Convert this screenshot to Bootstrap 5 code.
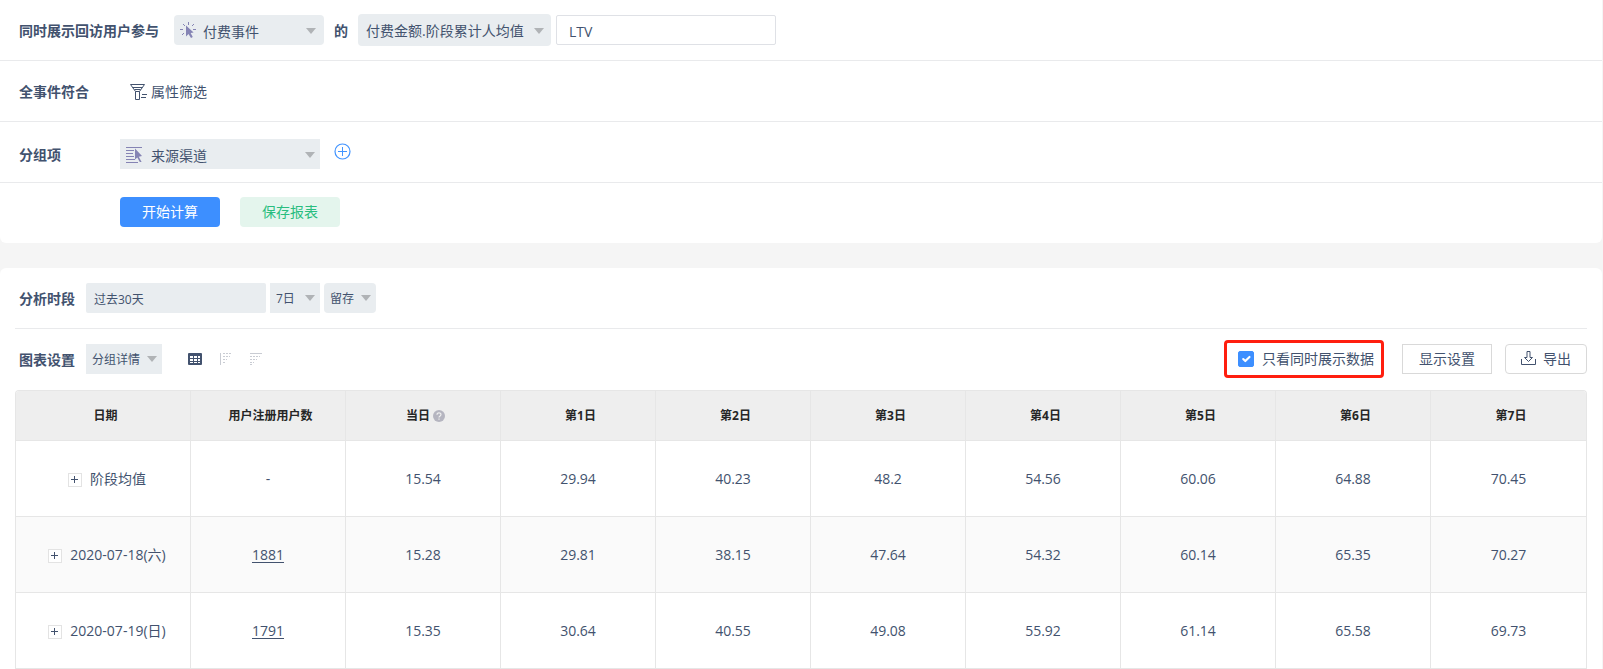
<!DOCTYPE html>
<html lang="zh-CN">
<head>
<meta charset="utf-8">
<meta name="viewport" content="width=device-width, initial-scale=1">
<title>LTV</title>
<link href="https://cdn.jsdelivr.net/npm/bootstrap@5.3.0/dist/css/bootstrap.min.css" rel="stylesheet">
<style>
  :root { --ink: #42526e; --fill: #e9edf0; --line: #e9eaec; --cell: #e6e6e6; }
  body { background: #f5f5f5; color: var(--ink); font: 14px/20px "Open Sans", "Noto Sans CJK SC", sans-serif; }
  .page { padding-right: 1px; }
  .panel { background: #fff; border-radius: 6px; }
  .query { border-radius: 0 0 6px 6px; }
  .panel-last { border-radius: 6px 6px 0 0; margin-top: 25px; }
  .bar { display: flex; align-items: center; min-height: 61px; border-bottom: 1px solid var(--line); }
  .query .bar { padding: 0 19px; }
  .bar-label { font-weight: 700; white-space: nowrap; padding-top: 2px; }
  .label-col { width: 101px; }
  .picker { position: relative; height: 30px; background: var(--fill); }
  .picker svg { position: absolute; left: 6px; top: 7px; pointer-events: none; }
  .picker select { display: block; width: 100%; height: 100%; border: 0; color: var(--ink); appearance: none; font-size: inherit; line-height: 20px;
    background: url("data:image/svg+xml,%3Csvg xmlns='http://www.w3.org/2000/svg' width='10' height='6'%3E%3Cpath d='M0 0h10L5 6z' fill='%23b0b3b6'/%3E%3C/svg%3E") no-repeat right 5px top 12px; }
  .w-event { width: 150px; margin-left: 15px; } .w-event select { padding: 4px 20px 0 29px; background-position: right 8px top 13px; }
  .w-metric { width: 193px; height: 32px; } .w-metric select { padding: 2px 20px 0 8px; background-position: right 7px top 14px; }
  .of-label { padding-left: 10px; padding-right: 10px; }
  .w-group { width: 200px; } .w-group select { padding: 3px 20px 0 31px; background-position: right 5px top 13px; }
  .compact { font-size: 12px; } .compact select { padding: 1px 15px 0 6px; }
  .w-days { width: 50px; } .w-kind { width: 52px; } .w-detail { width: 76px; }
  .after-label { margin-left: 11px; }
  .box { height: 30px; color: var(--ink); border: 1px solid #dfe1e6; border-radius: 2px; }
  .w-name { width: 220px; padding: 2px 12px 0; margin-left: 5px; }
  .w-range { width: 180px; padding: 2px 8px 0; font-size: 12px; background: var(--fill); border: 0; }
  .plain { padding: 0; border: 0; background: none; color: var(--ink); display: inline-flex; align-items: center; }
  .filter { margin-left: 10px; padding-top: 2px; }
  .add { margin-left: 14px; margin-bottom: 6px; }
  .query .bar-group { padding-top: 4px; }
  .act { width: 100px; height: 30px; padding: 0; font-size: 14px; line-height: 20px; border: 0; border-radius: 4px; }
  .act-run { background: #3d8fff; color: #fff; }
  .act-save { background: #e4f5ed; color: #29bd7f; }
  .actions { padding: 14px 20px 16px 120px; }
  .result { padding: 0 15px; }
  .result .bar { padding-left: 4px; }
  .result .tools { border: 0; padding-bottom: 1px; }
  .only { border: 3px solid #ff1e0f; border-radius: 4px; width: 160px; height: 38px; padding-left: 11px; margin-right: 18px; }
  .only .form-check-input { width: 16px; height: 16px; margin: 0 8px 0 0; border-radius: 2px; }
  .only .form-check-input:checked { background-color: #3d8fff; border-color: #3d8fff; }
  .tool-btn { background: #fff; border: 1px solid #d9d9d9; color: var(--ink); height: 30px; padding: 0; }
  .w-show { width: 90px; margin-right: 13px; } .w-export { width: 82px; border-radius: 4px; }
  .w-export svg { margin: 0 7px 2px 0; }
  .views { margin-left: 26px; gap: 18px; }
  .grid-wrap { border: 1px solid var(--cell); border-bottom: 0; border-radius: 4px 4px 0 0; overflow: hidden; }
  .grid { width: 100%; table-layout: fixed; text-align: center; border-collapse: separate; border-spacing: 0; }
  .grid th, .grid td { border: 0 solid var(--cell); border-bottom-width: 1px; border-right-width: 1px; vertical-align: middle; padding: 0; }
  .grid tr > :last-child { border-right-width: 0; }
  .grid thead th { height: 50px; background: #eee; color: #262626; font-size: 12px; padding-left: 5px; }
  .grid tbody th { font-weight: 400; padding-left: 8px; }
  .grid tbody tr { height: 76px; }
  .grid tbody tr:nth-child(2) { background: #fafafa; }
  .grid a { color: inherit; text-underline-offset: 2px; }
  .col-date { width: 175px; }
  .help { margin-left: 3px; }
  .expand { width: 14px; height: 14px; border: 1px solid #e3e3e3; background: #fff; padding: 0; margin-right: 8px; display: inline-flex; align-items: center; justify-content: center; vertical-align: 0; }
</style>
</head>
<body>
<main class="page">
  <section class="panel query">
    <div class="bar">
      <label class="bar-label" for="event">同时展示回访用户参与</label>
      <div class="picker w-event rounded-1">
        <svg width="16" height="16" viewBox="0 0 16 16" fill="none" stroke="#8584b4"><path d="M8.500 0v3M3 2l2 2M14 2l-2 2M0 7.500h3M13 7.500h3M2 13l2-2"/><path d="M6 3.500v11l2.500-2.500 2.500 4 1.800-1-2.200-4 3-.5z" fill="#8584b4" stroke="none"/></svg>
        <select id="event"><option>付费事件</option></select>
      </div>
      <label class="bar-label of-label" for="metric">的</label>
      <div class="picker w-metric rounded-1"><select id="metric"><option>付费金额.阶段累计人均值</option></select></div>
      <input class="box w-name" type="text" value="LTV" aria-label="指标名称">
    </div>
    <div class="bar">
      <span class="bar-label label-col">全事件符合</span>
      <button class="plain filter" type="button">
        <svg class="me-1" width="17" height="18" viewBox="0 0 17 18" fill="none" stroke="#42526e"><path d="M.5 1.500h14L9.500 8.500v8h-4v-8zM2.500 4.500h10M4.500 6.500h6M5.500 8.500h4M12 11.500h5M11 14.500h5"/></svg>属性筛选</button>
    </div>
    <div class="bar bar-group">
      <label class="bar-label label-col" for="group">分组项</label>
      <div class="picker w-group">
        <svg width="17" height="18" viewBox="0 0 17 18" fill="none" stroke="#8584b4"><path d="M0 1.500h16M0 4.500h8M0 7.500h7M0 10.500h8M0 13.500h9M0 16.500h12"/><path d="M9 2.500v11l2.300-2 2.500 4.500h1.800l-2.800-5.200 3.200-.8z" fill="#8584b4" stroke="none"/></svg>
        <select id="group"><option>来源渠道</option></select>
      </div>
      <button class="plain add" type="button" aria-label="添加分组项">
        <svg width="17" height="17" viewBox="0 0 17 17" fill="none" stroke="#4294ff"><circle cx="8.500" cy="8.500" r="7.500" stroke-width="1.200"/><path d="M8.500 4v9M4 8.500h9"/></svg>
      </button>
    </div>
    <div class="actions d-flex">
      <button class="btn act act-run me-3" type="button">开始计算</button>
      <button class="btn act act-save ms-1" type="button">保存报表</button>
    </div>
  </section>

  <section class="panel panel-last result">
    <div class="bar">
      <label class="bar-label" for="range">分析时段</label>
      <input class="box w-range after-label me-1" id="range" type="text" value="过去30天">
      <div class="picker compact w-days me-1"><select aria-label="天数"><option>7日</option></select></div>
      <div class="picker compact w-kind rounded-1"><select aria-label="分析类型"><option>留存</option></select></div>
    </div>
    <div class="bar tools">
      <label class="bar-label" for="chart">图表设置</label>
      <div class="picker compact w-detail after-label"><select id="chart"><option>分组详情</option></select></div>
      <div class="views d-flex align-items-center me-auto">
        <button class="plain" type="button" aria-label="表格"><svg width="14" height="12" viewBox="0 0 14 12"><rect width="14" height="12" rx="1" fill="#42526e"/><path d="M2 3h3v2H2zM6 3h3v2H6zM10 3h2v2h-2zM2 6h3v2H2zM6 6h3v2H6zM10 6h2v2h-2zM2 9h3v1H2zM6 9h3v1H6zM10 9h2v1h-2z" fill="#fff"/></svg></button>
        <button class="plain" type="button" aria-label="纵向对齐"><svg width="12" height="12" viewBox="0 0 12 12" fill="none" stroke="#c9ccd3"><path d="M.5 0v12"/><path d="M3 .5h9M3 3.500h7M3 6.500h4M3 9.500h2" stroke-dasharray="2 1"/></svg></button>
        <button class="plain" type="button" aria-label="横向对齐"><svg width="12" height="12" viewBox="0 0 12 12" fill="none" stroke="#c9ccd3"><path d="M0 .5h12"/><path d="M0 3.500h10M0 6.500h7M0 9.500h4M0 11.500h2" stroke-dasharray="2 1"/></svg></button>
      </div>
      <div class="only d-flex align-items-center">
        <input class="form-check-input" type="checkbox" id="only" checked><label for="only">只看同时展示数据</label>
      </div>
      <button class="tool-btn w-show" type="button">显示设置</button>
      <button class="tool-btn w-export d-flex align-items-center justify-content-center" type="button">
        <svg width="15" height="15" viewBox="0 0 15 15" fill="none" stroke="#42526e"><path d="M.5 8v5.500h14V8M6 .5h3v6h2.500l-4 4-4-4H6z"/></svg>导出</button>
    </div>
    <div class="grid-wrap">
      <table class="grid">
        <colgroup><col class="col-date"><col span="9"></colgroup>
        <thead><tr><th>日期</th><th>用户注册用户数</th><th>当日<svg class="help" width="12" height="12" viewBox="0 0 12 12"><circle cx="6" cy="6" r="6" fill="#b5b5c0"/><path d="M4 4.800C4 2.200 8 2.200 8 4.600 8 6 6 5.800 6 7.500M6 8.500v1.200" fill="none" stroke="#eee" stroke-width="1.200"/></svg></th><th>第1日</th><th>第2日</th><th>第3日</th><th>第4日</th><th>第5日</th><th>第6日</th><th>第7日</th></tr></thead>
        <tbody>
          <tr><th scope="row"><button class="expand" type="button" aria-label="展开"><svg width="8" height="8" viewBox="0 0 8 8" stroke="#42526e"><path d="M3.500 0v7M0 3.500h7"/></svg></button>阶段均值</th><td>-</td><td>15.54</td><td>29.94</td><td>40.23</td><td>48.2</td><td>54.56</td><td>60.06</td><td>64.88</td><td>70.45</td></tr>
          <tr><th scope="row"><button class="expand" type="button" aria-label="展开"><svg width="8" height="8" viewBox="0 0 8 8" stroke="#42526e"><path d="M3.500 0v7M0 3.500h7"/></svg></button>2020-07-18(六)</th><td><a href="#">1881</a></td><td>15.28</td><td>29.81</td><td>38.15</td><td>47.64</td><td>54.32</td><td>60.14</td><td>65.35</td><td>70.27</td></tr>
          <tr><th scope="row"><button class="expand" type="button" aria-label="展开"><svg width="8" height="8" viewBox="0 0 8 8" stroke="#42526e"><path d="M3.500 0v7M0 3.500h7"/></svg></button>2020-07-19(日)</th><td><a href="#">1791</a></td><td>15.35</td><td>30.64</td><td>40.55</td><td>49.08</td><td>55.92</td><td>61.14</td><td>65.58</td><td>69.73</td></tr>
        </tbody>
      </table>
    </div>
  </section>
</main>
<script src="https://cdn.jsdelivr.net/npm/bootstrap@5.3.0/dist/js/bootstrap.bundle.min.js"></script>
</body>
</html>
